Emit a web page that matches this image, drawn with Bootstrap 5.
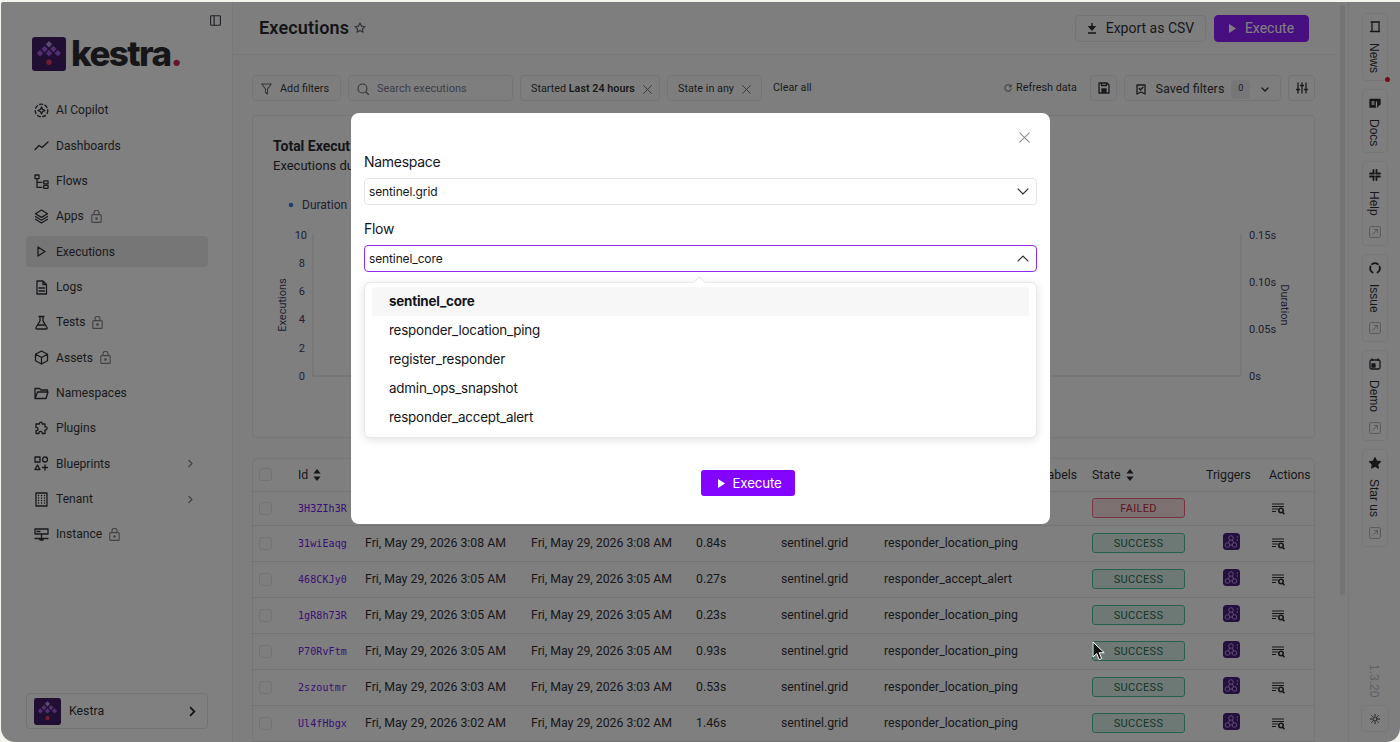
<!DOCTYPE html>
<html lang="en">
<head>
<meta charset="utf-8">
<title>Kestra Executions</title>
<link rel="stylesheet" href="https://cdn.jsdelivr.net/npm/bootstrap@5.3.0/dist/css/bootstrap.min.css">
<style>
html,body{height:100%;overflow:hidden}
body{background:#f4f4ef;font-family:Roboto,"Noto Sans",sans-serif;font-size:12.3px;letter-spacing:0;color:#15151c}
svg{display:block;flex:none}
.ic{width:15px;height:15px;fill:none;stroke:currentColor;stroke-width:1.3;stroke-linecap:round;stroke-linejoin:round}
.appwin{position:relative;margin:2px 0 0 1px;width:1399px;height:740px;overflow:hidden;border-radius:2px 0 14px 14px;background:#fbfbfc;display:flex}
.side{width:232px;flex:none;background:#fff;border-right:1px solid #ededf0;height:100%;position:relative;display:flex;flex-direction:column}
.side-toggle{align-self:flex-end;margin:13px 11px 0 0;color:#33333f}
.brand{display:flex;align-items:center;gap:5px;margin:11px 0 0 31px;height:34px}
.wordmark{font-family:Inter,sans-serif;font-size:35px;font-weight:800;letter-spacing:-.045em;line-height:34px;color:#14141b;margin-top:-3px}
.wordmark span{color:#c0183f}
.navlist{margin:24px 0 0 25px;width:182px;list-style:none;padding:0;font-size:12.1px}
.navitem{height:31px;margin-bottom:4.33px;display:flex;align-items:center;padding:0 14px 0 8px;border-radius:4px;color:#1b1b24;white-space:nowrap}
.navitem .ic{margin-right:7px}
.navitem.on{background:#e8e8ec}
.lock{width:11px;height:13px;margin-left:7px;color:#75757f;fill:none;stroke:currentColor;stroke-width:1.1}
.chev{width:7px;height:9px;margin-left:auto;color:#6e6e78;fill:none;stroke:currentColor;stroke-width:1.1}
.tenant{margin:auto 0 13px 25px;width:182px;height:36px;border:1px solid #e2e2e6;border-radius:4px;display:flex;align-items:center;padding:0 10px 0 7px;gap:8px;font-size:12.3px}
.tenant .chev{width:9px;height:11px;color:#14141b;stroke-width:1.5}
.pane{width:1102px;flex:none;min-width:0;display:flex;flex-direction:column}
.gutter{width:13px;flex:none;padding:3px 3px 0 5px}
.gutter i{display:block;width:5px;height:590px;border-radius:3px;background:#e4e4e8}
.pagehead{height:53px;flex:none;border-bottom:1px solid #ececef;display:flex;align-items:center;padding:0 26px 0 26px;gap:8px}
.pagehead h1{font-size:18px;font-weight:600;margin:0;letter-spacing:.01em;color:#101017}
.pagehead .star{color:#55555f;width:12px;height:12px;margin-left:-3px}
.hbtn{height:27px;border-radius:4px;font-size:14px;display:flex;align-items:center;padding:0 10px;gap:9px;border:1px solid #e5e5e9;background:#fbfbfc;color:#15151c;line-height:1;white-space:nowrap}
.hbtn.go{background:#8405ff;border-color:#8405ff;color:#fff;width:95px;justify-content:center}
.hbtn.out{width:131px;justify-content:center;margin-left:auto}
.filters{height:26px;margin:20px 20px 0 19px;display:flex;align-items:center;gap:7px;font-size:10.8px;flex:none;color:#1b1b24;white-space:nowrap}
.fbox{height:26px;border:1px solid #e6e6ea;border-radius:4px;display:flex;align-items:center;padding:2px 8px 0;gap:8px;background:#fbfbfc}
.fbox .x{width:9px;height:9px;color:#55555f;stroke-width:1;margin-left:auto;margin-right:3px}
.dimic{color:#55555f;stroke-width:1.1}
.muted-ph{color:#6f6f7c;font-size:11px}
.zero{width:19px;height:19px;background:#ececf0;border-radius:4px;display:flex;align-items:center;justify-content:center;font-size:9px}
.chartbox{margin:14px 20px 0 19px;height:323px;flex:none;border:1px solid #e8e8ec;border-radius:4px;background:#fcfcfd;position:relative;overflow:hidden}
.chartbox h2{font-size:14px;font-weight:700;margin:21px 0 0 20px;line-height:18px;color:#101017}
.chartbox p{margin:3px 0 0 20px;line-height:16px;font-size:13px;white-space:nowrap}
.chartbox svg{margin-top:17px}
.chartbox text{font-family:Roboto,sans-serif;font-size:11px;fill:#2a2c52}
.gridwrap{margin:20px 20px 0 19px;border:1px solid #e8e8ec;border-bottom:0;border-radius:6px 6px 0 0;background:#fcfcfd;flex:none}
.runs{table-layout:fixed;width:1061px;margin:0;--bs-table-bg:transparent;border-color:#e5e5e8;font-size:12.3px;color:#15151c}
.runs th,.runs td{padding:0;vertical-align:middle;white-space:nowrap;font-weight:400;overflow:hidden;box-shadow:none}
.runs thead tr{height:32px}
.runs tbody tr{height:36px}
.runs tbody tr.first{height:34px}
.runs .c0{width:45px}.runs .c1{width:67px}.runs .c2{width:166px}.runs .c3{width:165px}.runs .c4{width:85px}.runs .c5{width:103px}.runs .c6{width:157px}.runs .c7{width:51px}.runs .c8{width:114px}.runs .c9{width:63px}.runs .c10{width:45px}
.tick{display:block;width:13px;height:13px;margin-left:6px;border:1px solid #e3e3e7;border-radius:3px;background:#fbfbfc}
.rid{font-family:"DejaVu Sans Mono",monospace;font-size:10px;color:#6600e6;letter-spacing:.01em;font-weight:400}
.sorter{display:inline-block;vertical-align:-2px;width:8px;height:12px;margin-left:5px;fill:currentColor}
.pill{display:flex;align-items:center;justify-content:center;width:93px;height:20px;padding-top:2px;border-radius:3px;font-size:11px;letter-spacing:.03em;border:1px solid #3cb894;background:#d8f0e6;color:#0a5a44}
.pill.bad{border-color:#ee5a74;background:#f8dde1;color:#b50e1a}
.hook{width:17px;height:17px;margin:-3px 0 0 17px}
.lookup{width:13px;height:12px;margin:1px 0 0 3px;fill:none;stroke:#15151c;stroke-width:1.2}
.rail{flex:1;border-left:1px solid #ececef;height:100%;display:flex;flex-direction:column;align-items:center;padding-top:11px;font-family:"Liberation Sans",sans-serif;font-size:12px}
.railbtn{position:relative;width:26px;border:1px solid #ececef;border-radius:4px;display:flex;flex-direction:column;align-items:center;padding:7px 0 6.5px;margin-bottom:8px;color:#15151c;gap:10px;background:#fbfbfc}
.vert{writing-mode:vertical-rl;line-height:1;padding-right:2px}
.railbtn .ic{width:12px;height:12px}
.railbtn .ext{width:12px;height:12px;fill:none;stroke:#a8a8ae;stroke-width:1}
.dotred{position:absolute;right:-3px;bottom:-2px;width:5px;height:5px;border-radius:50%;background:#e0001a}
.ver{margin-top:auto;color:#b9b9bf}
.sunbtn{width:28px;height:27px;border:1px solid #ececef;border-radius:4px;display:flex;align-items:center;justify-content:center;margin:8px 0 10px}
.veil{position:absolute;inset:0;background:rgba(24,24,24,.55);z-index:5}
.dlg{position:absolute;left:350px;top:111px;width:699px;height:411px;z-index:6;border:0;border-radius:8px;padding:0 13px;display:flex;flex-direction:column;background:#fff;font-family:Inter,sans-serif;font-size:12px;color:#15151c;letter-spacing:-.01em}
.shut{align-self:flex-end;margin:19px 7px 0 0;width:11px;height:11px;color:#8e8e98;stroke-width:1}
.dlg label{display:block;font-size:14px;line-height:20px;margin:0;color:#16161d;letter-spacing:-.02em}
.picker{height:27px;border:1px solid #e4e4e7;border-radius:4px;display:flex;align-items:center;padding:0 7px 0 4px;justify-content:space-between;margin-top:6px;font-size:12px}
.picker.open{border-color:#8f2cf0}
.picker svg{width:12px;height:7px;fill:none;stroke:#2c2c36;stroke-width:1.2}
.pop{position:absolute;left:13px;right:13px;top:169px;height:156px;border:1px solid #e9e9ec;border-radius:6px;background:#fff;box-shadow:0 2px 10px rgba(0,0,0,.12);padding:4px 7px;font-size:13.4px;letter-spacing:-.015em}
.pop:before{content:"";position:absolute;top:-5px;left:330px;width:9px;height:9px;background:#fff;border-left:1px solid #e9e9ec;border-top:1px solid #e9e9ec;transform:rotate(45deg)}
.opt{height:29px;display:flex;align-items:center;padding-left:17px;border-radius:3px}
.opt.cur{background:#f7f7f8;font-weight:700}
.gobtn{margin:auto 0 28px 337px;width:94px;height:26px;background:#8405ff;color:#fff;border-radius:3px;display:flex;align-items:center;gap:7.5px;font-size:13.3px;border:0;padding:1px 0 0 17px;letter-spacing:-.01em}
.ptr{position:absolute;left:1091px;top:639px;z-index:7;width:13px;height:20px}
</style>
</head>
<body>
<svg width="0" height="0" class="position-absolute">
<defs>
<symbol id="k-logo" viewBox="0 0 34 34">
<rect width="34" height="34" rx="3" fill="#2c0654"/>
<path d="M17 4l3.200 3.300-3.200 3.300-3.200-3.300z" fill="#b687dd"/>
<path d="M12.600 8.700l3.200 3.300-3.200 3.300L9.400 12zM21.400 8.700l3.200 3.300-3.200 3.300-3.200-3.300zM8 13l3.200 3.300L8 19.600l-3.200-3.300zM17 13l3.200 3.300-3.200 3.300-3.200-3.300zM25.800 13l3.200 3.300-3.200 3.300-3.200-3.300z" fill="#9b4be0"/>
<circle cx="17" cy="25.300" r="2.700" fill="#e3204f"/>
</symbol>
<symbol id="hk" viewBox="0 0 17 17">
<rect width="17" height="17" rx="3.500" fill="#33066e"/>
<g fill="none" stroke="#b58be6" stroke-width="1"><circle cx="8" cy="5" r="2.300"/><circle cx="4.500" cy="12" r="2.300"/><circle cx="11.500" cy="12" r="2.300"/><path d="M6.700 7 5.400 9.900M9.300 6.900l1.300 3M6.800 12h2.400"/><path d="M14.300 4h.1M14.300 7h.1" stroke-linecap="round" stroke-width="1.400"/></g>
</symbol>
<symbol id="lk" viewBox="0 0 13 12">
<path d="M0 1h12M0 3.500h12M0 6h6M0 8.500h4"/><circle cx="9" cy="7.500" r="2.200" stroke-width="1.600"/><path d="M10.600 9.200 12.500 11.300" stroke-width="1.600"/>
</symbol>
<symbol id="lockp" viewBox="0 0 11 13"><rect x=".8" y="4.600" width="9.400" height="7.800" rx="1"/><path d="M3 4.600V2.800a2.500 2.500 0 0 1 5 0v1.800"/><circle cx="5.500" cy="8.500" r=".8" fill="currentColor"/></symbol>
<symbol id="chevr" viewBox="0 0 7 9"><path d="M1.500 1l3.500 3.500L1.500 8"/></symbol>
<symbol id="extl" viewBox="0 0 12 12"><rect x=".6" y=".6" width="10.800" height="10.800" rx="1"/><path d="M3.500 8.500 8.500 3.500M5 3.500h3.500V7"/></symbol>
<symbol id="srt" viewBox="0 0 8 12"><path d="M4 0l3.600 4.600H.4zM4 12 .4 7.400h7.200z"/></symbol>
<symbol id="xx" viewBox="0 0 10 10"><path d="M.7.700l8.600 8.600M9.300.700.700 9.300"/></symbol>
</defs>
</svg>

<div class="appwin">
  <aside class="side">
    <svg class="ic side-toggle" viewBox="0 0 12 12" style="width:11px;height:11px"><rect x=".6" y=".8" width="10.800" height="10.400" rx="1"/><path d="M4.500 1v10"/></svg>
    <div class="brand">
      <svg width="34" height="34"><use href="#k-logo"/></svg>
      <div class="wordmark">kestra<span>.</span></div>
    </div>
    <ul class="navlist">
      <li class="navitem"><svg class="ic" viewBox="0 0 15 15"><circle cx="7.500" cy="7.500" r="6.300" stroke-dasharray="3 2.400"/><path d="M7.500 4 8.600 6.400 11 7.500 8.600 8.600 7.500 11 6.400 8.600 4 7.500 6.400 6.400z"/></svg>AI Copilot</li>
      <li class="navitem"><svg class="ic" viewBox="0 0 15 15"><path d="M1 11.500 5 7.500 8 9.500 14 4"/></svg>Dashboards</li>
      <li class="navitem"><svg class="ic" viewBox="0 0 15 15"><rect x="1" y="1" width="4" height="3.600"/><rect x="9.800" y="6.800" width="4.200" height="3"/><rect x="9.800" y="11.300" width="4.200" height="3"/><path d="M3 5v8.300h5M3 8.300h5"/></svg>Flows</li>
      <li class="navitem"><svg class="ic" viewBox="0 0 15 15"><path d="M7.500 1 13.500 4.700 7.500 8.400 1.500 4.700zM1.500 7.500 7.500 11.200 13.500 7.500M1.500 10.300 7.500 14 13.500 10.300"/></svg>Apps<svg class="lock"><use href="#lockp"/></svg></li>
      <li class="navitem on"><svg class="ic" viewBox="0 0 15 15"><path d="M4 3v9l7-4.500z"/></svg>Executions</li>
      <li class="navitem"><svg class="ic" viewBox="0 0 15 15"><path d="M3 1h6l3.500 3.500V14H3zM9 1v3.500h3.500M5 8h5.500M5 11h5.500"/></svg>Logs</li>
      <li class="navitem"><svg class="ic" viewBox="0 0 15 15"><path d="M5 1.500h5M6 1.500v4.300L2 12.500c-.4.800 0 1.500.9 1.500h9.200c.9 0 1.300-.7.900-1.500L9 5.800V1.500M4 10h7"/></svg>Tests<svg class="lock"><use href="#lockp"/></svg></li>
      <li class="navitem"><svg class="ic" viewBox="0 0 15 15"><path d="M7.500 1 13.500 4.200v6.600L7.500 14 1.500 10.800V4.200zM1.500 4.200 7.500 7.500 13.500 4.200M7.500 7.500V14"/></svg>Assets<svg class="lock"><use href="#lockp"/></svg></li>
      <li class="navitem"><svg class="ic" viewBox="0 0 15 15"><path d="M1 12.500V2.500h4.500L7 4h6.500v2M1 12.500h11l2-6.500H3.500z"/></svg>Namespaces</li>
      <li class="navitem"><svg class="ic" viewBox="0 0 15 15"><path d="M6 1.500c1-.8 2.500 0 2.200 1.500H11v2.800c1.500-.3 2.500 1 2 2.200-.4.900-1.200 1-2 .8v3.700H8.200c.3-1.400-.6-2.300-1.700-2.200-1.100.1-1.800 1-1.500 2.200H2v-3c1.300.2 2-.6 2-1.500S3.300 6.200 2 6.500V3h3.500C5.400 2.500 5.500 1.900 6 1.500z"/></svg>Plugins</li>
      <li class="navitem"><svg class="ic" viewBox="0 0 15 15"><rect x="1" y="1" width="5" height="5"/><circle cx="11" cy="3.500" r="2.500"/><path d="M3.500 9 6 13.500H1zM11 9v5M8.500 11.500h5"/></svg>Blueprints<svg class="chev"><use href="#chevr"/></svg></li>
      <li class="navitem"><svg class="ic" viewBox="0 0 15 15"><rect x="2" y="1" width="11" height="13"/><path d="M4.500 3.500h.1M7.500 3.500h.1M10.500 3.500h.1M4.500 6h.1M7.500 6h.1M10.500 6h.1M4.500 8.500h.1M7.500 8.500h.1M10.500 8.500h.1M4.500 11h.1M7.500 11h.1M10.500 11h.1"/></svg>Tenant<svg class="chev"><use href="#chevr"/></svg></li>
      <li class="navitem"><svg class="ic" viewBox="0 0 15 15"><rect x="1" y="2" width="13" height="5"/><path d="M3 4.500h3M7.500 7v4M1 11.500h13M6 11.500h3v1.500H6z"/></svg>Instance<svg class="lock"><use href="#lockp"/></svg></li>
    </ul>
    <div class="tenant">
      <svg width="27" height="27"><use href="#k-logo"/></svg>
      <span>Kestra</span>
      <svg class="chev"><use href="#chevr"/></svg>
    </div>
  </aside>

  <main class="pane">
    <header class="pagehead">
      <h1>Executions</h1>
      <svg class="ic star" viewBox="0 0 13 13"><path d="M6.500 1l1.600 3.400 3.700.5-2.700 2.500.7 3.700-3.300-1.800-3.300 1.800.7-3.700L1.200 4.900l3.700-.5z"/></svg>
      <button class="hbtn out" type="button"><svg width="10" height="11" viewBox="0 0 10 11"><path d="M5 0v6M2.300 3.800 5 7l2.700-3.200zM1 10h8" stroke="currentColor" stroke-width="1.400" fill="currentColor"/></svg>Export as CSV</button>
      <button class="hbtn go" type="button"><svg width="7" height="9" viewBox="0 0 7 9"><path d="M0 0l7 4.500L0 9z" fill="currentColor"/></svg>Execute</button>
    </header>
    <div class="filters">
      <div class="fbox" style="width:89px"><svg class="ic dimic" style="width:11px;height:12px" viewBox="0 0 11 12"><path d="M.7 1h9.600L6.500 6v5L4.500 9.500V6z"/></svg>Add filters</div>
      <div class="fbox" style="width:165px"><svg class="ic dimic" style="width:12px;height:12px" viewBox="0 0 12 12"><circle cx="5.500" cy="5.500" r="4.500"/><path d="M9 9l2.500 2.500"/></svg><span class="muted-ph">Search executions</span></div>
      <div class="fbox" style="width:140px;padding-left:10px"><span>Started <b class="fw-semibold">Last 24 hours</b></span><svg class="ic x" viewBox="0 0 10 10"><use href="#xx"/></svg></div>
      <div class="fbox" style="width:95px;padding-left:10px"><span>State in any</span><svg class="ic x" viewBox="0 0 10 10"><use href="#xx"/></svg></div>
      <span class="ms-1">Clear all</span>
      <span class="ms-auto d-flex align-items-center gap-1" style="margin-right:6px"><svg class="ic" style="width:8px;height:8px;color:#77777f" viewBox="0 0 10 10"><path d="M8.800 3.200A4 4 0 1 0 9 6M9 1v2.500H6.500"/></svg>Refresh data</span>
      <div class="fbox justify-content-center" style="width:27px;padding:0"><svg class="ic" style="width:12px;height:12px" viewBox="0 0 12 12"><path d="M1 1h8l2 2v8H1zM3.500 1v2.500h5V1"/><rect x="4" y="7" width="4" height="3" fill="currentColor"/></svg></div>
      <div class="fbox justify-content-center" style="width:157px;font-size:12.6px;gap:7px"><svg class="ic" style="width:10px;height:11px;margin-right:3px" viewBox="0 0 10 11"><path d="M1 1h8v9L5 8 1 10zM3.200 4.500 4.500 6 7 3.300"/></svg>Saved filters<span class="zero">0</span><svg class="ic ms-1" style="width:8px;height:5px" viewBox="0 0 8 5"><path d="M1 1l3 3 3-3"/></svg></div>
      <div class="fbox justify-content-center" style="width:27px;padding:0"><svg class="ic" style="width:12px;height:12px" viewBox="0 0 12 12"><path d="M2 1v10M6 1v10M10 1v10M.5 7.500h3M4.500 3.500h3M8.500 7.500h3"/></svg></div>
    </div>
    <section class="chartbox">
      <h2>Total Execut</h2>
      <p>Executions dur</p>
      <svg width="1061" height="220" viewBox="0 0 1061 220" role="img" aria-label="Executions chart">
        <circle cx="38" cy="14" r="2.300" fill="#2a6fd6"/>
        <text x="49" y="18" style="font-size:12px">Duration</text>
        <path d="M60 44V185H988V44" fill="none" stroke="#d8d8de"/>
        <text x="54" y="48" text-anchor="end">10</text>
        <text x="52" y="76" text-anchor="end">8</text>
        <text x="52" y="104" text-anchor="end">6</text>
        <text x="52" y="132" text-anchor="end">4</text>
        <text x="52" y="161" text-anchor="end">2</text>
        <text x="52" y="189" text-anchor="end">0</text>
        <text transform="translate(33 114) rotate(-90)" text-anchor="middle">Executions</text>
        <text x="996" y="48">0.15s</text>
        <text x="996" y="95">0.10s</text>
        <text x="996" y="142">0.05s</text>
        <text x="996" y="189">0s</text>
        <text transform="translate(1028 114) rotate(90)" text-anchor="middle">Duration</text>
      </svg>
    </section>
    <section class="gridwrap">
      <table class="table runs">
        <colgroup><col class="c0"><col class="c1"><col class="c2"><col class="c3"><col class="c4"><col class="c5"><col class="c6"><col class="c7"><col class="c8"><col class="c9"><col class="c10"></colgroup>
        <thead>
          <tr><th><i class="tick"></i></th><th>Id<svg class="sorter"><use href="#srt"/></svg></th><th aria-label="Start date"></th><th aria-label="End date"></th><th aria-label="Duration"></th><th aria-label="Namespace"></th><th aria-label="Flow"></th><th>Labels</th><th>State<svg class="sorter"><use href="#srt"/></svg></th><th>Triggers</th><th>Actions</th></tr>
        </thead>
        <tbody>
          <tr class="first"><td><i class="tick"></i></td><td class="rid">3H3ZIh3R</td><td></td><td></td><td></td><td></td><td></td><td></td><td><span class="pill bad">FAILED</span></td><td></td><td><svg class="lookup"><use href="#lk"/></svg></td></tr>
          <tr><td><i class="tick"></i></td><td class="rid">31wiEaqg</td><td>Fri, May 29, 2026 3:08 AM</td><td>Fri, May 29, 2026 3:08 AM</td><td>0.84s</td><td>sentinel.grid</td><td>responder_location_ping</td><td></td><td><span class="pill">SUCCESS</span></td><td><svg class="hook"><use href="#hk"/></svg></td><td><svg class="lookup"><use href="#lk"/></svg></td></tr>
          <tr><td><i class="tick"></i></td><td class="rid">468CKJy0</td><td>Fri, May 29, 2026 3:05 AM</td><td>Fri, May 29, 2026 3:05 AM</td><td>0.27s</td><td>sentinel.grid</td><td>responder_accept_alert</td><td></td><td><span class="pill">SUCCESS</span></td><td><svg class="hook"><use href="#hk"/></svg></td><td><svg class="lookup"><use href="#lk"/></svg></td></tr>
          <tr><td><i class="tick"></i></td><td class="rid">1gR8h73R</td><td>Fri, May 29, 2026 3:05 AM</td><td>Fri, May 29, 2026 3:05 AM</td><td>0.23s</td><td>sentinel.grid</td><td>responder_location_ping</td><td></td><td><span class="pill">SUCCESS</span></td><td><svg class="hook"><use href="#hk"/></svg></td><td><svg class="lookup"><use href="#lk"/></svg></td></tr>
          <tr><td><i class="tick"></i></td><td class="rid">P70RvFtm</td><td>Fri, May 29, 2026 3:05 AM</td><td>Fri, May 29, 2026 3:05 AM</td><td>0.93s</td><td>sentinel.grid</td><td>responder_location_ping</td><td></td><td><span class="pill">SUCCESS</span></td><td><svg class="hook"><use href="#hk"/></svg></td><td><svg class="lookup"><use href="#lk"/></svg></td></tr>
          <tr><td><i class="tick"></i></td><td class="rid">2szoutmr</td><td>Fri, May 29, 2026 3:03 AM</td><td>Fri, May 29, 2026 3:03 AM</td><td>0.53s</td><td>sentinel.grid</td><td>responder_location_ping</td><td></td><td><span class="pill">SUCCESS</span></td><td><svg class="hook"><use href="#hk"/></svg></td><td><svg class="lookup"><use href="#lk"/></svg></td></tr>
          <tr><td><i class="tick"></i></td><td class="rid">Ul4fHbgx</td><td>Fri, May 29, 2026 3:02 AM</td><td>Fri, May 29, 2026 3:02 AM</td><td>1.46s</td><td>sentinel.grid</td><td>responder_location_ping</td><td></td><td><span class="pill">SUCCESS</span></td><td><svg class="hook"><use href="#hk"/></svg></td><td><svg class="lookup"><use href="#lk"/></svg></td></tr>
        </tbody>
      </table>
    </section>
  </main>
  <div class="gutter"><i></i></div>

  <nav class="rail">
    <div class="railbtn"><svg class="ic" viewBox="0 0 12 12"><path d="M2 1h8.500M3 1v9.500h7V1M1.500 10.500h9"/></svg><span class="vert">News</span><i class="dotred"></i></div>
    <div class="railbtn"><svg class="ic" viewBox="0 0 12 12"><path d="M1 2.500h10v4.500L8 10H1z" fill="currentColor"/><path d="M7.500 5v5M3 5h2M3 7h2" stroke="#fff"/></svg><span class="vert">Docs</span></div>
    <div class="railbtn"><svg class="ic" viewBox="0 0 12 12" style="stroke-width:1.800"><path d="M1 4.500h4M7 4.500h4M1 7.500h4M7 7.500h4M4.500 1v3M7.500 1v3M4.500 8v3M7.500 8v3"/></svg><span class="vert">Help</span><svg class="ext"><use href="#extl"/></svg></div>
    <div class="railbtn"><svg class="ic" viewBox="0 0 12 12" style="stroke-width:1.800"><path d="M3 2.200a5 5 0 0 1 6 0M10.500 4.500a5 5 0 0 1-2 6M1.500 4.500a5 5 0 0 0 2 6"/></svg><span class="vert">Issue</span><svg class="ext"><use href="#extl"/></svg></div>
    <div class="railbtn"><svg class="ic" viewBox="0 0 12 12"><rect x="1" y="2" width="10" height="9" rx="1.500"/><rect x="3" y="6" width="3" height="3" fill="currentColor"/><path d="M3 1v1M9 1v1"/></svg><span class="vert">Demo</span><svg class="ext"><use href="#extl"/></svg></div>
    <div class="railbtn"><svg class="ic" viewBox="0 0 12 12"><path d="M6 .8 7.600 4.200l3.700.5-2.700 2.500.7 3.800L6 9.200 2.700 11l.7-3.800L.7 4.700l3.700-.5z" fill="currentColor"/></svg><span class="vert">Star us</span><svg class="ext"><use href="#extl"/></svg></div>
    <span class="vert ver">1.3.20</span>
    <div class="sunbtn"><svg class="ic" style="width:10px;height:10px;stroke-width:1.100" viewBox="0 0 12 12"><circle cx="6" cy="6" r="2.500"/><path d="M6 .5v1.500M6 10v1.500M.5 6H2M10 6h1.500M2 2l1 1M9 9l1 1M2 10l1-1M9 3l1-1"/></svg></div>
  </nav>

  <div class="veil"></div>

  <div class="modal-content dlg" role="dialog" aria-modal="true">
    <svg class="ic shut" viewBox="0 0 10 10"><use href="#xx"/></svg>
    <div style="margin-top:9px">
      <label>Namespace</label>
      <div class="picker">sentinel.grid<svg viewBox="0 0 12 7"><path d="M.7.700 6 6l5.300-5.300"/></svg></div>
    </div>
    <div style="margin-top:14px">
      <label>Flow</label>
      <div class="picker open">sentinel_core<svg viewBox="0 0 12 7"><path d="M.7 6.300 6 1l5.300 5.300"/></svg></div>
    </div>
    <div class="pop">
      <div class="opt cur">sentinel_core</div>
      <div class="opt">responder_location_ping</div>
      <div class="opt">register_responder</div>
      <div class="opt">admin_ops_snapshot</div>
      <div class="opt">responder_accept_alert</div>
    </div>
    <button class="gobtn" type="button"><svg width="7" height="9" viewBox="0 0 7 9"><path d="M0 0l7 4.500L0 9z" fill="currentColor"/></svg>Execute</button>
  </div>

  <svg class="ptr" viewBox="0 0 13 20"><path d="M1 1v15l3.700-3.400 2.500 6 2.500-1.100-2.500-5.800h5z" fill="#111" stroke="#fff" stroke-width="1"/></svg>
</div>
<script src="https://cdn.jsdelivr.net/npm/bootstrap@5.3.0/dist/js/bootstrap.bundle.min.js"></script>
</body>
</html>
